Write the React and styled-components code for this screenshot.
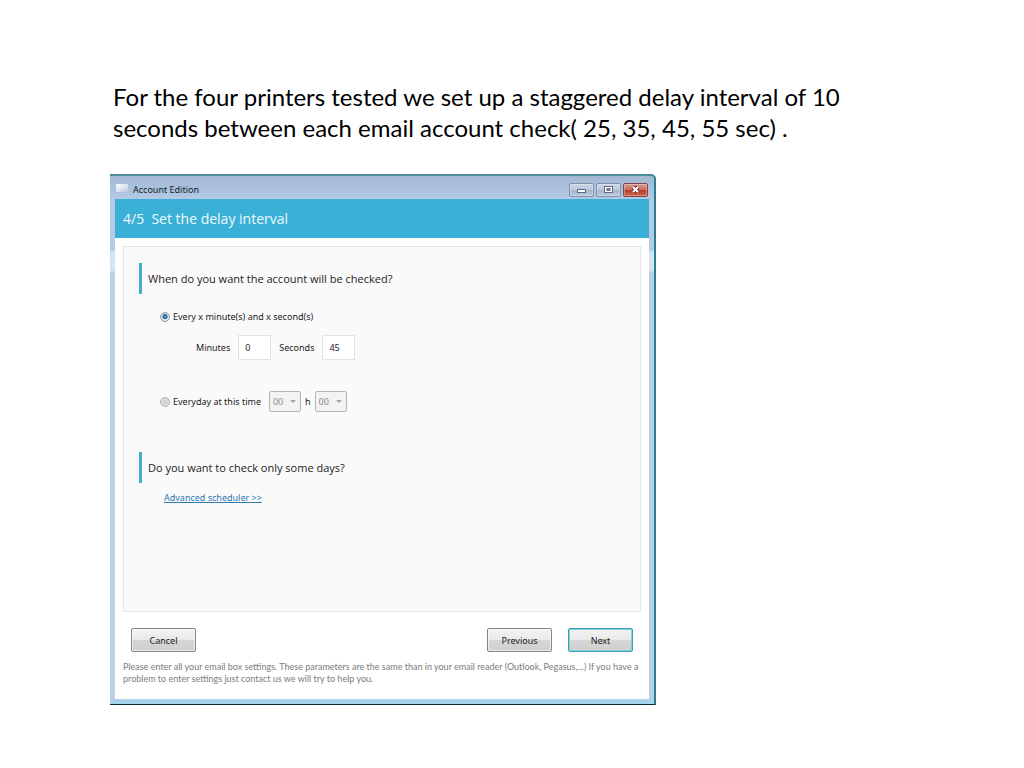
import React, { useState } from "react";
import styled, { createGlobalStyle, css } from "styled-components";

const GlobalStyle = createGlobalStyle`
  *, *::before, *::after { box-sizing: border-box; }
  body {
    margin: 0;
    background: #fff;
    color: #222;
    font-family: "Noto Sans", "Open Sans", sans-serif;
  }
  button, input, select { font: inherit; color: inherit; }
`;

const Slide = styled.main`
  min-height: 100vh;
  padding: 81px 110px 60px;
`;

const Caption = styled.p`
  max-width: 760px;
  margin: 0 0 31px;
  padding-left: 3px;
  font-family: Lato, sans-serif;
  font-size: 24px;
  line-height: 31px;
  color: #000;
`;

const Window = styled.section`
  max-width: 546px;
  padding: 0 5px 5px;
  border-top: 2px solid #4b8c9c;
  border-right: 2px solid #2b7f8b;
  border-bottom: 1px solid #0c2a30;
  border-top-right-radius: 5px;
  background:
    linear-gradient(#a4d3ea, #a4d3ea) bottom / 100% 4px no-repeat,
    linear-gradient(#a3b9d2, #b4cae5 24px, #b4cbe6 74px, #d5e4f2 76px, #d5e4f2 94px, #b9d0e6 97px);
`;

const TitleBar = styled.header`
  display: flex;
  align-items: center;
  gap: 4px;
  height: 23px;
  padding: 4px 1px 0 0;
`;

const WindowTitle = styled.h1`
  flex: 1;
  margin: 0;
  font-size: 9px;
  line-height: 14px;
  font-weight: 400;
  color: #111a28;
`;

const Controls = styled.div`
  display: flex;
  gap: 2px;
`;

const ControlButton = styled.button`
  display: grid;
  place-items: center;
  width: 25px;
  height: 14px;
  padding: 0;
  border: 1px solid ${(p) => (p.$danger ? "#7d4650" : "#8190a8")};
  border-radius: 2px;
  background: ${(p) =>
    p.$danger
      ? "linear-gradient(#dc9a8f, #cf6a58 48%, #b93d28 52%, #cc6650)"
      : "linear-gradient(#c8d6e8, #b9c9de 48%, #a3b6ce 52%, #b7c9df)"};
  box-shadow: inset 0 0 0 1px rgba(255, 255, 255, 0.3);
`;

const Client = styled.div`
  background: #fff;
`;

const StepHeading = styled.h2`
  margin: 0;
  padding: 1px 8px 0;
  font-family: "Open Sans", sans-serif;
  font-size: 14px;
  line-height: 38px;
  font-weight: 400;
  color: #edf9fd;
  background: #3bb0d6;
  white-space: pre;
`;

const ClientBody = styled.form`
  padding: 8px 8px 14px;
`;

const Panel = styled.div`
  min-height: 366px;
  padding: 16px 15px;
  border: 1px solid #e6e7e7;
  background: #fafafa;
`;

const Question = styled.h3`
  margin: 0;
  padding-left: 6px;
  border-left: 3px solid #3fb0d0;
  font-family: "Open Sans", sans-serif;
  font-size: 11px;
  line-height: 31px;
  font-weight: 400;
`;

const Row = styled.div`
  display: flex;
  align-items: center;
  font-size: 9px;
  line-height: 14px;
`;

const IntervalRow = styled(Row)`
  padding: 16px 0 0 21px;
`;

const FieldsRow = styled(Row)`
  padding: 11px 0 0 57px;
  gap: 8px;
`;

const TimeRow = styled(Row)`
  gap: 8px;
  padding: 31px 0 40px 21px;
`;

const OptionLabel = styled.label`
  display: inline-flex;
  align-items: center;
  gap: 3px;
`;

const Radio = styled.input`
  appearance: none;
  width: 10px;
  height: 10px;
  margin: 0;
  border: 1px solid #a9adb0;
  border-radius: 50%;
  background: radial-gradient(#c9cbcc, #ededed);

  &:checked {
    border-color: #8b9dab;
    background: radial-gradient(circle at 50% 45%, #7cc0e2 0, #2a6e9f 25%, #2b6390 36%, #dfe8ee 50%);
  }
`;

const NumberInput = styled.input`
  width: 33px;
  height: 25px;
  padding: 0 6px;
  border: 1px solid #e1e3e5;
  background: #fff;
`;

const SelectWrap = styled.span`
  position: relative;
  display: inline-flex;

  &::after {
    content: "";
    position: absolute;
    right: 5px;
    top: 9px;
    border: 3px solid transparent;
    border-top-color: #a5a5a5;
    border-bottom: 0;
    pointer-events: none;
  }
`;

const TimeSelect = styled.select`
  appearance: none;
  width: 32px;
  height: 21px;
  padding: 0 3px;
  border: 1px solid #b5b5b5;
  border-radius: 2px;
  background: #f3f3f3;
  color: #8c8c8c;
  opacity: 1;
`;

const TimeGroup = styled.span`
  display: inline-flex;
  align-items: center;
  gap: 4px;
`;

const LinkRow = styled(Row)`
  padding: 8px 0 0 25px;
`;

const Link = styled.a`
  color: #2f78b0;
  text-decoration: underline;
`;

const Actions = styled.div`
  display: flex;
  gap: 16px;
  padding: 16px 8px 9px;
`;

const ActionButton = styled.button`
  width: 65px;
  height: 24px;
  padding: 1px 0 0;
  border: 1px solid #858585;
  border-radius: 2px;
  background: linear-gradient(#f3f3f3, #e9e9e9 49%, #d6d6d6 51%, #d0d0d0);
  box-shadow: inset 0 0 0 1px rgba(255, 255, 255, 0.6);
  font-size: 9px;
  line-height: 14px;

  ${(p) =>
    p.$primary &&
    css`
      border-color: #3d9fb4;
      box-shadow: inset 0 0 0 1px #86cfdf;
    `}
  ${(p) => p.$pushRight && "margin-right: auto;"}
`;

const Hint = styled.p`
  margin: 0;
  font-family: Lato, sans-serif;
  font-size: 9px;
  line-height: 12px;
  color: #7c7c7c;
`;

const AppIcon = () => (
  <svg width="14" height="11" viewBox="0 0 14 11" aria-hidden="true">
    <defs>
      <linearGradient id="envelope" x1="0" y1="0" x2="1" y2="1">
        <stop offset="0" stopColor="#ffffff" />
        <stop offset="1" stopColor="#b7cbdf" />
      </linearGradient>
    </defs>
    <rect x="1" y="0" width="12" height="8" rx="1" fill="url(#envelope)" />
    <path d="M1 1l6 4 6-4" fill="none" stroke="#e8eff6" strokeWidth="1" />
  </svg>
);

const MinimizeIcon = () => (
  <svg width="11" height="9" viewBox="0 0 11 9" aria-hidden="true">
    <rect x="1.5" y="4.5" width="8" height="3" fill="#fff" stroke="#5d6a7d" />
  </svg>
);

const MaximizeIcon = () => (
  <svg width="11" height="9" viewBox="0 0 11 9" aria-hidden="true">
    <rect x="1.5" y="1.5" width="8" height="6" fill="#fff" stroke="#5d6a7d" />
    <rect x="4" y="3.5" width="3" height="2" fill="#8190a5" stroke="#5d6a7d" />
  </svg>
);

const CloseIcon = () => (
  <svg width="11" height="9" viewBox="0 0 11 9" aria-hidden="true">
    <path d="M3 2l5 5M8 2l-5 5" stroke="#6b3038" strokeWidth="4" />
    <path d="M3 2l5 5M8 2l-5 5" stroke="#fff" strokeWidth="2" />
  </svg>
);

export default function App() {
  const [mode, setMode] = useState("interval");
  const [minutes, setMinutes] = useState("0");
  const [seconds, setSeconds] = useState("45");
  const daily = mode === "daily";

  return (
    <>
      <GlobalStyle />
      <Slide>
        <Caption>
          For the four printers tested we set up a staggered delay interval of 10
          seconds between each email account check( 25, 35, 45, 55 sec) .
        </Caption>
        <Window>
          <TitleBar>
            <AppIcon />
            <WindowTitle>Account Edition</WindowTitle>
            <Controls>
              <ControlButton type="button" aria-label="Minimize"><MinimizeIcon /></ControlButton>
              <ControlButton type="button" aria-label="Maximize"><MaximizeIcon /></ControlButton>
              <ControlButton type="button" aria-label="Close" $danger><CloseIcon /></ControlButton>
            </Controls>
          </TitleBar>
          <Client>
            <StepHeading>{"4/5  Set the delay interval"}</StepHeading>
            <ClientBody onSubmit={(e) => e.preventDefault()}>
              <Panel>
                <Question>When do you want the account will be checked?</Question>
                <IntervalRow>
                  <OptionLabel>
                    <Radio type="radio" name="mode" checked={!daily} onChange={() => setMode("interval")} />
                    Every x minute(s) and x second(s)
                  </OptionLabel>
                </IntervalRow>
                <FieldsRow>
                  <label htmlFor="minutes">Minutes</label>
                  <NumberInput id="minutes" value={minutes} onChange={(e) => setMinutes(e.target.value)} />
                  <label htmlFor="seconds">Seconds</label>
                  <NumberInput id="seconds" value={seconds} onChange={(e) => setSeconds(e.target.value)} />
                </FieldsRow>
                <TimeRow>
                  <OptionLabel>
                    <Radio type="radio" name="mode" checked={daily} onChange={() => setMode("daily")} />
                    Everyday at this time
                  </OptionLabel>
                  <TimeGroup>
                    <SelectWrap>
                      <TimeSelect aria-label="Hour" disabled={!daily}><option>00</option></TimeSelect>
                    </SelectWrap>
                    <label htmlFor="minute-of-hour">h</label>
                    <SelectWrap>
                      <TimeSelect id="minute-of-hour" disabled={!daily}><option>00</option></TimeSelect>
                    </SelectWrap>
                  </TimeGroup>
                </TimeRow>
                <Question>Do you want to check only some days?</Question>
                <LinkRow>
                  <Link href="#scheduler">Advanced scheduler &gt;&gt;</Link>
                </LinkRow>
              </Panel>
              <Actions>
                <ActionButton type="button" $pushRight>Cancel</ActionButton>
                <ActionButton type="button">Previous</ActionButton>
                <ActionButton type="submit" $primary>Next</ActionButton>
              </Actions>
              <Hint>
                Please enter all your email box settings. These parameters are the same than in your
                email reader (Outlook, Pegasus,...) If you have a<br />
                problem to enter settings just contact us we will try to help you.
              </Hint>
            </ClientBody>
          </Client>
        </Window>
      </Slide>
    </>
  );
}
